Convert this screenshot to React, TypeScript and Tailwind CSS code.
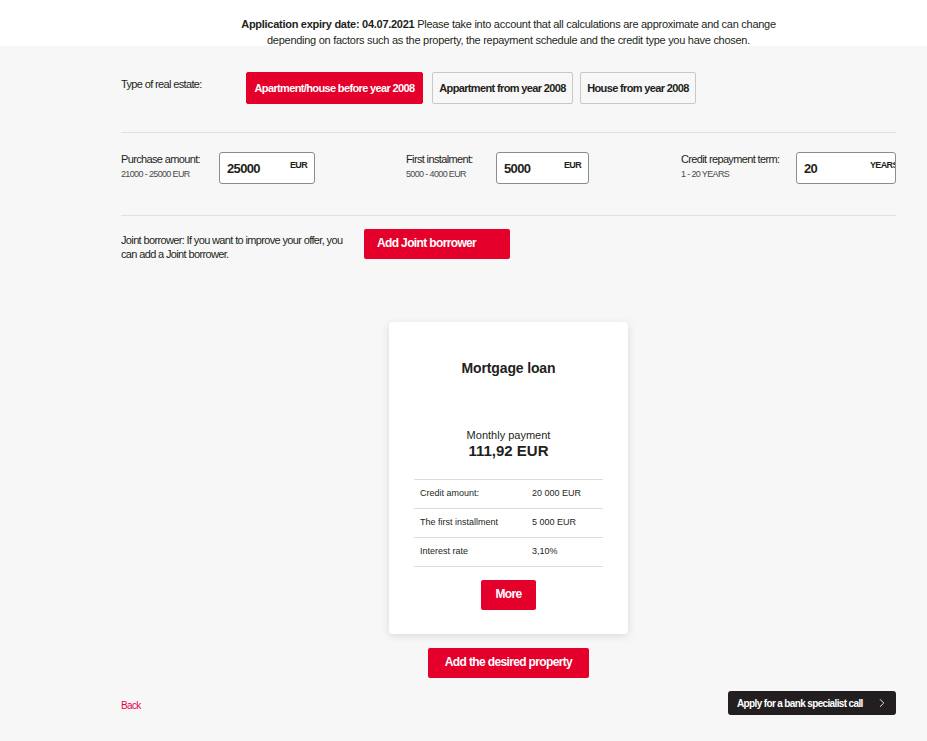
import { ChevronRight } from 'lucide-react'

const TYPES = [
  { label: 'Apartment/house before year 2008', active: true, w: 'w-[177px]', ml: '' },
  { label: 'Appartment from year 2008', active: false, w: 'w-[141px]', ml: 'ml-[9px]' },
  { label: 'House from year 2008', active: false, w: 'w-[116px]', ml: 'ml-[7px]' },
]

const FIELDS = [
  { label: 'Purchase amount:', range: '21000 - 25000 EUR', value: '25000', unit: 'EUR', inputW: 'w-[96px]', gap: 'w-[98px]', col: 'w-[285px]', unitL: 'left-[70px]' },
  { label: 'First instalment:', range: '5000 - 4000 EUR', value: '5000', unit: 'EUR', inputW: 'w-[93px]', gap: 'w-[90px]', col: 'w-[275px]', unitL: 'left-[67px]' },
  { label: 'Credit repayment term:', range: '1 - 20 YEARS', value: '20', unit: 'YEARS', inputW: 'w-[100px]', gap: 'w-[115px]', col: 'flex-1', unitL: 'left-[73px]' },
]

const ROWS = [
  ['Credit amount:', '20 000 EUR'],
  ['The first installment', '5 000 EUR'],
  ['Interest rate', '3,10%'],
]

export default function App() {
  return (
    <div className="min-h-[741px] bg-[#f7f7f7] font-['Liberation_Sans',Arial,sans-serif] text-[#231f20] tracking-[-0.04em]">
      {/* Expiry note */}
      <div className="bg-white h-[46px] pt-[16px]">
        <div className="mx-[121px] w-[775px] text-center text-[11px] leading-[16px] tracking-[-0.025em]">
          <span className="font-bold">Application expiry date: 04.07.2021</span> Please take into account that all calculations are approximate and can change
          <br />
          depending on factors such as the property, the repayment schedule and the credit type you have chosen.
        </div>
      </div>

      <div className="mx-[121px] w-[775px]">
        {/* Type of real estate */}
        <div className="flex items-start pt-[26px] pb-[28px] border-b border-[#e1e1e1]">
          <div className="w-[125px] text-[11px] pt-[4px]">Type of real estate:</div>
          <div className="flex">
            {TYPES.map(t => (
              <button
                key={t.label}
                className={`${t.w} ${t.ml} h-[32px] rounded-[2px] text-[11px] font-bold border ${t.active ? 'bg-[#e4002b] border-[#e4002b] text-white' : 'bg-[#f7f7f7] border-[#c8c8c8] text-[#231f20]'}`}
              >
                {t.label}
              </button>
            ))}
          </div>
        </div>

        {/* Amounts */}
        <div className="flex pt-[19px] pb-[31px] border-b border-[#e1e1e1]">
          {FIELDS.map(f => (
            <div key={f.label} className={`flex ${f.col}`}>
              <div className={f.gap}>
                <div className="text-[11px] leading-[14px]">{f.label}</div>
                <div className="text-[9px] leading-[14px] text-[#4a4a4a] mt-[1px]">{f.range}</div>
              </div>
              <div className={`${f.inputW} h-[32px] bg-white border border-[#8c8c8c] rounded-[3px] relative overflow-hidden`}>
                <span className="absolute left-[7px] top-[6px] text-[13px] font-bold">{f.value}</span>
                <span className={`absolute ${f.unitL} top-[6px] text-[9px] font-bold whitespace-nowrap`}>{f.unit}</span>
              </div>
            </div>
          ))}
        </div>

        {/* Joint borrower */}
        <div className="flex items-start pt-[13px]">
          <div className="w-[243px] pr-[8px] text-[11px] leading-[14px] pt-[4px]">
            Joint borrower: If you want to improve your offer, you can add a Joint borrower.
          </div>
          <button className="w-[146px] h-[30px] bg-[#e4002b] text-white text-[12px] font-bold text-left pl-[13px] pb-[2px] rounded-[2px]">
            Add Joint borrower
          </button>
        </div>

        {/* Offer card */}
        <div className="flex flex-col items-center mt-[61px]">
          <div className="w-[239px] h-[312px] bg-white rounded-[4px] shadow-[0_2px_8px_rgba(0,0,0,0.12)] flex flex-col items-center">
            <div className="mt-[36px] text-[14px] font-bold tracking-[-0.01em]">Mortgage loan</div>
            <div className="mt-[50px] text-[11px] leading-[13px] tracking-normal">Monthly payment</div>
            <div className="text-[15px] leading-[18px] font-bold tracking-normal">111,92 EUR</div>
            <div className="mt-[19px] w-[189px] border-t border-[#dcdcdc]">
              {ROWS.map(r => (
                <div key={r[0]} className="flex h-[29px] items-center border-b border-[#dcdcdc] text-[9px] tracking-normal">
                  <span className="w-[118px] pl-[6px]">{r[0]}</span>
                  <span>{r[1]}</span>
                </div>
              ))}
            </div>
            <button className="mt-[13px] w-[55px] h-[30px] bg-[#e4002b] text-white text-[12px] font-bold rounded-[2px] pb-[2px]">More</button>
          </div>
          <button className="mt-[14px] w-[161px] h-[30px] bg-[#e4002b] text-white text-[12px] font-bold rounded-[2px] pb-[2px]">
            Add the desired property
          </button>
        </div>

        {/* Footer */}
        <div className="flex items-center justify-between mt-[13px]">
          <a className="text-[10px] text-[#e8004c] pt-[4px]">Back</a>
          <button className="w-[168px] h-[24px] bg-[#231f20] text-white text-[10px] font-bold rounded-[3px] flex items-center justify-between pl-[9px] pr-[7px]">
            Apply for a bank specialist call
            <ChevronRight size={14} strokeWidth={1.5} />
          </button>
        </div>
      </div>
    </div>
  )
}
